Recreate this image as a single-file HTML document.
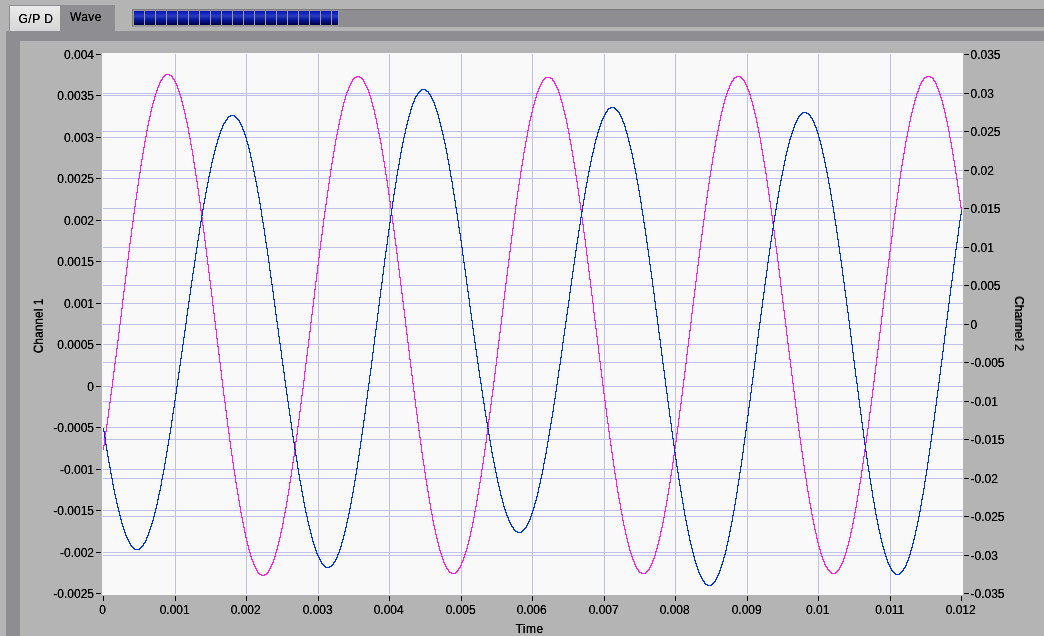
<!DOCTYPE html>
<html><head><meta charset="utf-8"><style>
html,body{margin:0;padding:0;width:1044px;height:636px;overflow:hidden;background:#b4b4b4;}
svg{display:block;}
text{font-family:"Liberation Sans",sans-serif;font-size:12px;}
</style></head><body>
<svg width="1044" height="636" viewBox="0 0 1044 636">
<defs>
<filter id="crisp" x="0" y="0" width="100%" height="100%"><feComponentTransfer><feFuncA type="linear" slope="1.5" intercept="0"/></feComponentTransfer></filter>
<linearGradient id="tabg" x1="0" y1="0" x2="0" y2="1"><stop offset="0" stop-color="#ebebeb"/><stop offset="1" stop-color="#d6d6d6"/></linearGradient>
<linearGradient id="pb" x1="0" y1="0" x2="0" y2="1">
<stop offset="0" stop-color="#0010b8"/><stop offset="0.35" stop-color="#2a3cc0"/><stop offset="0.6" stop-color="#0a1aa0"/><stop offset="1" stop-color="#000040"/></linearGradient>
</defs>
<rect x="0" y="0" width="1044" height="636" fill="#b4b4b4"/>
<!-- tabs -->
<rect x="9" y="5" width="106" height="26" fill="#8e8d92"/>
<rect x="10" y="6" width="50" height="25" fill="url(#tabg)"/>
<!-- progress bar -->
<rect x="132" y="9" width="912" height="18" fill="#7c7c7c"/>
<rect x="133" y="10" width="911" height="17" fill="#8e8d92"/>
<rect x="133" y="10" width="206" height="17" fill="#9a9a9a"/>
<rect x="134" y="11" width="10" height="14" fill="url(#pb)"/><rect x="145" y="11" width="10" height="14" fill="url(#pb)"/><rect x="156" y="11" width="10" height="14" fill="url(#pb)"/><rect x="167" y="11" width="10" height="14" fill="url(#pb)"/><rect x="178" y="11" width="10" height="14" fill="url(#pb)"/><rect x="189" y="11" width="10" height="14" fill="url(#pb)"/><rect x="200" y="11" width="10" height="14" fill="url(#pb)"/><rect x="211" y="11" width="10" height="14" fill="url(#pb)"/><rect x="222" y="11" width="10" height="14" fill="url(#pb)"/><rect x="233" y="11" width="10" height="14" fill="url(#pb)"/><rect x="244" y="11" width="10" height="14" fill="url(#pb)"/><rect x="255" y="11" width="10" height="14" fill="url(#pb)"/><rect x="266" y="11" width="10" height="14" fill="url(#pb)"/><rect x="277" y="11" width="10" height="14" fill="url(#pb)"/><rect x="288" y="11" width="10" height="14" fill="url(#pb)"/><rect x="299" y="11" width="10" height="14" fill="url(#pb)"/><rect x="310" y="11" width="10" height="14" fill="url(#pb)"/><rect x="321" y="11" width="10" height="14" fill="url(#pb)"/><rect x="332" y="11" width="6" height="14" fill="url(#pb)"/>
<!-- panel -->
<rect x="6" y="31" width="1038" height="605" fill="#8e8d92"/>
<rect x="20" y="41" width="1024" height="595" fill="#b4b4b4"/>
<rect x="102" y="53" width="861" height="542" fill="#f9f9f9"/><rect x="175" y="54" width="1" height="540" fill="#c0c0e8"/><rect x="246" y="54" width="1" height="540" fill="#c0c0e8"/><rect x="318" y="54" width="1" height="540" fill="#c0c0e8"/><rect x="389" y="54" width="1" height="540" fill="#c0c0e8"/><rect x="461" y="54" width="1" height="540" fill="#c0c0e8"/><rect x="532" y="54" width="1" height="540" fill="#c0c0e8"/><rect x="604" y="54" width="1" height="540" fill="#c0c0e8"/><rect x="675" y="54" width="1" height="540" fill="#c0c0e8"/><rect x="747" y="54" width="1" height="540" fill="#c0c0e8"/><rect x="818" y="54" width="1" height="540" fill="#c0c0e8"/><rect x="890" y="54" width="1" height="540" fill="#c0c0e8"/><rect x="103" y="386" width="860" height="1" fill="#c0c0e8"/><rect x="103" y="131" width="860" height="1" fill="#c0c0e8"/><rect x="103" y="516" width="860" height="1" fill="#c0c0e8"/><rect x="103" y="261" width="860" height="1" fill="#c0c0e8"/><rect x="103" y="137" width="860" height="1" fill="#c0c0e8"/><rect x="103" y="401" width="860" height="1" fill="#c0c0e8"/><rect x="103" y="285" width="860" height="1" fill="#c0c0e8"/><rect x="103" y="552" width="860" height="1" fill="#c0c0e8"/><rect x="103" y="170" width="860" height="1" fill="#c0c0e8"/><rect x="103" y="427" width="860" height="1" fill="#c0c0e8"/><rect x="103" y="555" width="860" height="1" fill="#c0c0e8"/><rect x="103" y="303" width="860" height="1" fill="#c0c0e8"/><rect x="103" y="178" width="860" height="1" fill="#c0c0e8"/><rect x="103" y="439" width="860" height="1" fill="#c0c0e8"/><rect x="103" y="324" width="860" height="1" fill="#c0c0e8"/><rect x="103" y="208" width="860" height="1" fill="#c0c0e8"/><rect x="103" y="469" width="860" height="1" fill="#c0c0e8"/><rect x="103" y="344" width="860" height="1" fill="#c0c0e8"/><rect x="103" y="220" width="860" height="1" fill="#c0c0e8"/><rect x="103" y="93" width="860" height="1" fill="#c0c0e8"/><rect x="103" y="478" width="860" height="1" fill="#c0c0e8"/><rect x="103" y="95" width="860" height="1" fill="#c0c0e8"/><rect x="103" y="362" width="860" height="1" fill="#c0c0e8"/><rect x="103" y="247" width="860" height="1" fill="#c0c0e8"/><rect x="103" y="510" width="860" height="1" fill="#c0c0e8"/><path d="M103 445h1v5h-1zM104 438h1v8h-1zM105 431h1v8h-1zM106 424h1v8h-1zM107 417h1v8h-1zM108 409h1v9h-1zM109 402h1v8h-1zM110 394h1v9h-1zM111 387h1v8h-1zM112 379h1v9h-1zM113 371h1v9h-1zM114 363h1v9h-1zM115 356h1v8h-1zM116 348h1v9h-1zM117 340h1v9h-1zM118 332h1v9h-1zM119 324h1v9h-1zM120 316h1v9h-1zM121 308h1v9h-1zM122 299h1v10h-1zM123 291h1v9h-1zM124 283h1v9h-1zM125 275h1v9h-1zM126 267h1v9h-1zM127 259h1v9h-1zM128 251h1v9h-1zM129 243h1v9h-1zM130 236h1v8h-1zM131 228h1v9h-1zM132 221h1v8h-1zM133 213h1v9h-1zM134 206h1v8h-1zM135 199h1v8h-1zM136 192h1v8h-1zM137 185h1v8h-1zM138 178h1v8h-1zM139 172h1v7h-1zM140 165h1v8h-1zM141 159h1v7h-1zM142 153h1v7h-1zM143 147h1v7h-1zM144 141h1v7h-1zM145 136h1v6h-1zM146 130h1v7h-1zM147 125h1v6h-1zM148 120h1v6h-1zM149 116h1v5h-1zM150 111h1v6h-1zM151 107h1v5h-1zM152 103h1v5h-1zM153 100h1v4h-1zM154 96h1v5h-1zM155 93h1v4h-1zM156 90h1v4h-1zM157 87h1v4h-1zM158 85h1v3h-1zM159 82h1v4h-1zM160 80h1v3h-1zM161 79h1v2h-1zM162 77h1v3h-1zM163 76h1v2h-1zM164 75h1v2h-1zM165 74h1v2h-1zM166 74h1v1h-1zM167 74h1v1h-1zM168 74h1v1h-1zM169 74h1v2h-1zM170 75h1v1h-1zM171 75h1v2h-1zM172 76h1v3h-1zM173 78h1v2h-1zM174 79h1v3h-1zM175 81h1v3h-1zM176 83h1v3h-1zM177 85h1v4h-1zM178 88h1v4h-1zM179 91h1v4h-1zM180 94h1v4h-1zM181 97h1v5h-1zM182 101h1v5h-1zM183 105h1v5h-1zM184 109h1v5h-1zM185 113h1v6h-1zM186 118h1v5h-1zM187 122h1v6h-1zM188 127h1v7h-1zM189 133h1v6h-1zM190 138h1v7h-1zM191 144h1v6h-1zM192 149h1v7h-1zM193 155h1v8h-1zM194 162h1v7h-1zM195 168h1v8h-1zM196 175h1v7h-1zM197 181h1v8h-1zM198 188h1v8h-1zM199 195h1v8h-1zM200 202h1v9h-1zM201 210h1v8h-1zM202 217h1v9h-1zM203 225h1v8h-1zM204 232h1v9h-1zM205 240h1v9h-1zM206 248h1v9h-1zM207 256h1v9h-1zM208 264h1v9h-1zM209 272h1v9h-1zM210 280h1v9h-1zM211 288h1v9h-1zM212 296h1v10h-1zM213 305h1v9h-1zM214 313h1v9h-1zM215 321h1v9h-1zM216 329h1v10h-1zM217 338h1v9h-1zM218 346h1v9h-1zM219 354h1v9h-1zM220 362h1v9h-1zM221 370h1v10h-1zM222 379h1v9h-1zM223 387h1v9h-1zM224 395h1v8h-1zM225 402h1v9h-1zM226 410h1v9h-1zM227 418h1v9h-1zM228 426h1v8h-1zM229 433h1v9h-1zM230 441h1v8h-1zM231 448h1v8h-1zM232 455h1v8h-1zM233 462h1v8h-1zM234 469h1v7h-1zM235 475h1v8h-1zM236 482h1v7h-1zM237 488h1v7h-1zM238 494h1v7h-1zM239 500h1v7h-1zM240 506h1v7h-1zM241 512h1v6h-1zM242 517h1v6h-1zM243 522h1v6h-1zM244 527h1v6h-1zM245 532h1v6h-1zM246 537h1v5h-1zM247 541h1v5h-1zM248 545h1v5h-1zM249 549h1v4h-1zM250 552h1v5h-1zM251 556h1v4h-1zM252 559h1v3h-1zM253 561h1v4h-1zM254 564h1v3h-1zM255 566h1v3h-1zM256 568h1v3h-1zM257 570h1v3h-1zM258 572h1v2h-1zM259 573h1v2h-1zM260 574h1v1h-1zM261 574h1v2h-1zM262 575h1v1h-1zM263 575h1v1h-1zM264 574h1v2h-1zM265 574h1v1h-1zM266 573h1v2h-1zM267 572h1v2h-1zM268 570h1v3h-1zM269 568h1v3h-1zM270 566h1v3h-1zM271 564h1v3h-1zM272 562h1v3h-1zM273 559h1v4h-1zM274 556h1v4h-1zM275 552h1v5h-1zM276 549h1v4h-1zM277 545h1v5h-1zM278 541h1v5h-1zM279 537h1v5h-1zM280 532h1v6h-1zM281 528h1v5h-1zM282 523h1v6h-1zM283 517h1v7h-1zM284 512h1v6h-1zM285 507h1v6h-1zM286 501h1v7h-1zM287 495h1v7h-1zM288 489h1v7h-1zM289 482h1v8h-1zM290 476h1v7h-1zM291 469h1v8h-1zM292 462h1v8h-1zM293 456h1v7h-1zM294 448h1v9h-1zM295 441h1v8h-1zM296 434h1v8h-1zM297 426h1v9h-1zM298 419h1v8h-1zM299 411h1v9h-1zM300 403h1v9h-1zM301 395h1v9h-1zM302 388h1v8h-1zM303 380h1v9h-1zM304 371h1v10h-1zM305 363h1v9h-1zM306 355h1v9h-1zM307 347h1v9h-1zM308 339h1v9h-1zM309 331h1v9h-1zM310 322h1v10h-1zM311 314h1v9h-1zM312 306h1v9h-1zM313 298h1v9h-1zM314 289h1v10h-1zM315 281h1v9h-1zM316 273h1v9h-1zM317 265h1v9h-1zM318 257h1v9h-1zM319 249h1v9h-1zM320 241h1v9h-1zM321 234h1v8h-1zM322 226h1v9h-1zM323 218h1v9h-1zM324 211h1v8h-1zM325 204h1v8h-1zM326 197h1v8h-1zM327 190h1v8h-1zM328 183h1v8h-1zM329 176h1v8h-1zM330 169h1v8h-1zM331 163h1v7h-1zM332 157h1v7h-1zM333 151h1v7h-1zM334 145h1v7h-1zM335 139h1v7h-1zM336 134h1v6h-1zM337 129h1v6h-1zM338 124h1v6h-1zM339 119h1v6h-1zM340 115h1v5h-1zM341 110h1v6h-1zM342 106h1v5h-1zM343 102h1v5h-1zM344 99h1v4h-1zM345 95h1v5h-1zM346 92h1v4h-1zM347 90h1v3h-1zM348 87h1v4h-1zM349 85h1v3h-1zM350 83h1v3h-1zM351 81h1v3h-1zM352 79h1v3h-1zM353 78h1v2h-1zM354 77h1v2h-1zM355 77h1v1h-1zM356 76h1v2h-1zM357 76h1v1h-1zM358 76h1v1h-1zM359 76h1v2h-1zM360 77h1v1h-1zM361 77h1v2h-1zM362 78h1v2h-1zM363 79h1v3h-1zM364 81h1v3h-1zM365 83h1v3h-1zM366 85h1v3h-1zM367 87h1v3h-1zM368 89h1v4h-1zM369 92h1v4h-1zM370 95h1v4h-1zM371 98h1v5h-1zM372 102h1v5h-1zM373 106h1v4h-1zM374 109h1v6h-1zM375 114h1v5h-1zM376 118h1v6h-1zM377 123h1v6h-1zM378 128h1v6h-1zM379 133h1v6h-1zM380 138h1v6h-1zM381 143h1v7h-1zM382 149h1v7h-1zM383 155h1v7h-1zM384 161h1v7h-1zM385 167h1v8h-1zM386 174h1v7h-1zM387 180h1v8h-1zM388 187h1v8h-1zM389 194h1v8h-1zM390 201h1v8h-1zM391 208h1v8h-1zM392 215h1v9h-1zM393 223h1v8h-1zM394 230h1v9h-1zM395 238h1v8h-1zM396 245h1v9h-1zM397 253h1v9h-1zM398 261h1v9h-1zM399 269h1v9h-1zM400 277h1v9h-1zM401 285h1v9h-1zM402 293h1v9h-1zM403 301h1v9h-1zM404 309h1v9h-1zM405 317h1v10h-1zM406 326h1v9h-1zM407 334h1v9h-1zM408 342h1v9h-1zM409 350h1v10h-1zM410 359h1v9h-1zM411 367h1v9h-1zM412 375h1v9h-1zM413 383h1v9h-1zM414 391h1v9h-1zM415 399h1v9h-1zM416 407h1v8h-1zM417 414h1v9h-1zM418 422h1v9h-1zM419 430h1v8h-1zM420 437h1v8h-1zM421 444h1v9h-1zM422 452h1v8h-1zM423 459h1v7h-1zM424 465h1v8h-1zM425 472h1v8h-1zM426 479h1v7h-1zM427 485h1v7h-1zM428 491h1v7h-1zM429 497h1v7h-1zM430 503h1v7h-1zM431 509h1v6h-1zM432 514h1v7h-1zM433 520h1v6h-1zM434 525h1v5h-1zM435 529h1v6h-1zM436 534h1v5h-1zM437 538h1v5h-1zM438 542h1v5h-1zM439 546h1v5h-1zM440 550h1v4h-1zM441 553h1v4h-1zM442 556h1v4h-1zM443 559h1v4h-1zM444 562h1v3h-1zM445 564h1v3h-1zM446 566h1v3h-1zM447 568h1v2h-1zM448 569h1v3h-1zM449 571h1v2h-1zM450 572h1v1h-1zM451 572h1v2h-1zM452 573h1v1h-1zM453 573h1v1h-1zM454 573h1v1h-1zM455 572h1v2h-1zM456 571h1v2h-1zM457 570h1v2h-1zM458 568h1v3h-1zM459 567h1v2h-1zM460 565h1v3h-1zM461 562h1v4h-1zM462 560h1v3h-1zM463 557h1v4h-1zM464 554h1v4h-1zM465 551h1v4h-1zM466 548h1v4h-1zM467 544h1v5h-1zM468 540h1v5h-1zM469 536h1v5h-1zM470 531h1v6h-1zM471 527h1v5h-1zM472 522h1v6h-1zM473 517h1v6h-1zM474 511h1v7h-1zM475 506h1v6h-1zM476 500h1v7h-1zM477 494h1v7h-1zM478 488h1v7h-1zM479 482h1v7h-1zM480 476h1v7h-1zM481 469h1v8h-1zM482 463h1v7h-1zM483 456h1v8h-1zM484 449h1v8h-1zM485 442h1v8h-1zM486 434h1v9h-1zM487 427h1v8h-1zM488 419h1v9h-1zM489 412h1v8h-1zM490 404h1v9h-1zM491 396h1v9h-1zM492 389h1v8h-1zM493 381h1v9h-1zM494 373h1v9h-1zM495 365h1v9h-1zM496 357h1v9h-1zM497 348h1v10h-1zM498 340h1v9h-1zM499 332h1v9h-1zM500 324h1v9h-1zM501 316h1v9h-1zM502 308h1v9h-1zM503 299h1v10h-1zM504 291h1v9h-1zM505 283h1v9h-1zM506 275h1v9h-1zM507 267h1v9h-1zM508 259h1v9h-1zM509 251h1v9h-1zM510 243h1v9h-1zM511 235h1v9h-1zM512 228h1v8h-1zM513 220h1v9h-1zM514 213h1v8h-1zM515 205h1v9h-1zM516 198h1v8h-1zM517 191h1v8h-1zM518 184h1v8h-1zM519 178h1v7h-1zM520 171h1v8h-1zM521 165h1v7h-1zM522 159h1v7h-1zM523 152h1v8h-1zM524 147h1v6h-1zM525 141h1v7h-1zM526 136h1v6h-1zM527 130h1v7h-1zM528 125h1v6h-1zM529 120h1v6h-1zM530 116h1v5h-1zM531 112h1v5h-1zM532 107h1v6h-1zM533 104h1v4h-1zM534 100h1v5h-1zM535 97h1v4h-1zM536 93h1v5h-1zM537 91h1v3h-1zM538 88h1v4h-1zM539 86h1v3h-1zM540 84h1v3h-1zM541 82h1v3h-1zM542 80h1v3h-1zM543 79h1v2h-1zM544 78h1v2h-1zM545 77h1v2h-1zM546 77h1v1h-1zM547 77h1v1h-1zM548 77h1v1h-1zM549 77h1v1h-1zM550 77h1v2h-1zM551 78h1v1h-1zM552 78h1v3h-1zM553 80h1v2h-1zM554 81h1v3h-1zM555 83h1v3h-1zM556 85h1v3h-1zM557 87h1v3h-1zM558 89h1v4h-1zM559 92h1v4h-1zM560 95h1v5h-1zM561 99h1v4h-1zM562 102h1v5h-1zM563 106h1v5h-1zM564 110h1v5h-1zM565 114h1v5h-1zM566 118h1v6h-1zM567 123h1v6h-1zM568 128h1v6h-1zM569 133h1v7h-1zM570 139h1v6h-1zM571 144h1v7h-1zM572 150h1v7h-1zM573 156h1v7h-1zM574 162h1v7h-1zM575 168h1v8h-1zM576 175h1v7h-1zM577 181h1v8h-1zM578 188h1v8h-1zM579 195h1v8h-1zM580 202h1v8h-1zM581 209h1v9h-1zM582 217h1v8h-1zM583 224h1v9h-1zM584 232h1v8h-1zM585 239h1v9h-1zM586 247h1v9h-1zM587 255h1v9h-1zM588 263h1v9h-1zM589 271h1v9h-1zM590 279h1v9h-1zM591 287h1v9h-1zM592 295h1v9h-1zM593 303h1v10h-1zM594 312h1v9h-1zM595 320h1v9h-1zM596 328h1v9h-1zM597 336h1v9h-1zM598 344h1v10h-1zM599 353h1v9h-1zM600 361h1v9h-1zM601 369h1v9h-1zM602 377h1v9h-1zM603 385h1v9h-1zM604 393h1v8h-1zM605 400h1v9h-1zM606 408h1v9h-1zM607 416h1v8h-1zM608 423h1v9h-1zM609 431h1v8h-1zM610 438h1v8h-1zM611 445h1v8h-1zM612 452h1v8h-1zM613 459h1v8h-1zM614 466h1v8h-1zM615 473h1v7h-1zM616 479h1v8h-1zM617 486h1v7h-1zM618 492h1v7h-1zM619 498h1v6h-1zM620 503h1v7h-1zM621 509h1v6h-1zM622 514h1v7h-1zM623 520h1v6h-1zM624 525h1v5h-1zM625 529h1v6h-1zM626 534h1v5h-1zM627 538h1v5h-1zM628 542h1v5h-1zM629 546h1v5h-1zM630 550h1v4h-1zM631 553h1v4h-1zM632 556h1v4h-1zM633 559h1v3h-1zM634 561h1v4h-1zM635 564h1v3h-1zM636 566h1v3h-1zM637 568h1v2h-1zM638 569h1v3h-1zM639 571h1v2h-1zM640 572h1v1h-1zM641 572h1v2h-1zM642 573h1v1h-1zM643 573h1v1h-1zM644 573h1v1h-1zM645 572h1v2h-1zM646 571h1v2h-1zM647 570h1v2h-1zM648 569h1v2h-1zM649 567h1v3h-1zM650 565h1v3h-1zM651 563h1v3h-1zM652 560h1v4h-1zM653 558h1v3h-1zM654 555h1v4h-1zM655 551h1v5h-1zM656 548h1v4h-1zM657 544h1v5h-1zM658 540h1v5h-1zM659 536h1v5h-1zM660 531h1v6h-1zM661 527h1v5h-1zM662 522h1v6h-1zM663 517h1v6h-1zM664 511h1v7h-1zM665 506h1v6h-1zM666 500h1v7h-1zM667 494h1v7h-1zM668 488h1v7h-1zM669 482h1v7h-1zM670 475h1v8h-1zM671 469h1v7h-1zM672 462h1v8h-1zM673 455h1v8h-1zM674 448h1v8h-1zM675 441h1v8h-1zM676 433h1v9h-1zM677 426h1v8h-1zM678 418h1v9h-1zM679 410h1v9h-1zM680 403h1v8h-1zM681 395h1v9h-1zM682 387h1v9h-1zM683 379h1v9h-1zM684 371h1v9h-1zM685 363h1v9h-1zM686 354h1v10h-1zM687 346h1v9h-1zM688 338h1v9h-1zM689 330h1v9h-1zM690 322h1v9h-1zM691 313h1v10h-1zM692 305h1v9h-1zM693 297h1v9h-1zM694 289h1v9h-1zM695 281h1v9h-1zM696 273h1v9h-1zM697 265h1v9h-1zM698 257h1v9h-1zM699 249h1v9h-1zM700 241h1v9h-1zM701 234h1v8h-1zM702 226h1v9h-1zM703 219h1v8h-1zM704 211h1v9h-1zM705 204h1v8h-1zM706 197h1v8h-1zM707 190h1v8h-1zM708 183h1v8h-1zM709 176h1v8h-1zM710 170h1v7h-1zM711 164h1v7h-1zM712 157h1v8h-1zM713 152h1v6h-1zM714 146h1v7h-1zM715 140h1v7h-1zM716 135h1v6h-1zM717 130h1v6h-1zM718 125h1v6h-1zM719 120h1v6h-1zM720 115h1v6h-1zM721 111h1v5h-1zM722 107h1v5h-1zM723 103h1v5h-1zM724 99h1v5h-1zM725 96h1v4h-1zM726 93h1v4h-1zM727 90h1v4h-1zM728 88h1v3h-1zM729 85h1v4h-1zM730 83h1v3h-1zM731 81h1v3h-1zM732 80h1v2h-1zM733 78h1v3h-1zM734 77h1v2h-1zM735 77h1v1h-1zM736 76h1v2h-1zM737 76h1v1h-1zM738 76h1v1h-1zM739 76h1v1h-1zM740 76h1v2h-1zM741 77h1v2h-1zM742 78h1v2h-1zM743 79h1v2h-1zM744 80h1v3h-1zM745 82h1v3h-1zM746 84h1v3h-1zM747 86h1v4h-1zM748 89h1v3h-1zM749 91h1v4h-1zM750 94h1v5h-1zM751 98h1v4h-1zM752 101h1v5h-1zM753 105h1v5h-1zM754 109h1v5h-1zM755 113h1v5h-1zM756 117h1v6h-1zM757 122h1v6h-1zM758 127h1v6h-1zM759 132h1v6h-1zM760 137h1v7h-1zM761 143h1v7h-1zM762 149h1v7h-1zM763 155h1v7h-1zM764 161h1v7h-1zM765 167h1v7h-1zM766 173h1v8h-1zM767 180h1v8h-1zM768 187h1v8h-1zM769 194h1v8h-1zM770 201h1v8h-1zM771 208h1v8h-1zM772 215h1v9h-1zM773 223h1v8h-1zM774 230h1v9h-1zM775 238h1v9h-1zM776 246h1v8h-1zM777 253h1v9h-1zM778 261h1v9h-1zM779 269h1v9h-1zM780 277h1v10h-1zM781 286h1v9h-1zM782 294h1v9h-1zM783 302h1v9h-1zM784 310h1v9h-1zM785 318h1v9h-1zM786 326h1v10h-1zM787 335h1v9h-1zM788 343h1v9h-1zM789 351h1v9h-1zM790 359h1v9h-1zM791 367h1v9h-1zM792 375h1v9h-1zM793 383h1v9h-1zM794 391h1v9h-1zM795 399h1v9h-1zM796 407h1v8h-1zM797 414h1v9h-1zM798 422h1v9h-1zM799 430h1v8h-1zM800 437h1v8h-1zM801 444h1v8h-1zM802 451h1v8h-1zM803 458h1v8h-1zM804 465h1v8h-1zM805 472h1v7h-1zM806 478h1v8h-1zM807 485h1v7h-1zM808 491h1v7h-1zM809 497h1v7h-1zM810 503h1v6h-1zM811 508h1v7h-1zM812 514h1v6h-1zM813 519h1v6h-1zM814 524h1v6h-1zM815 529h1v5h-1zM816 533h1v6h-1zM817 538h1v5h-1zM818 542h1v5h-1zM819 546h1v4h-1zM820 549h1v5h-1zM821 553h1v4h-1zM822 556h1v4h-1zM823 559h1v3h-1zM824 561h1v4h-1zM825 564h1v3h-1zM826 566h1v2h-1zM827 567h1v3h-1zM828 569h1v2h-1zM829 570h1v2h-1zM830 571h1v2h-1zM831 572h1v2h-1zM832 573h1v1h-1zM833 573h1v1h-1zM834 573h1v1h-1zM835 572h1v2h-1zM836 571h1v2h-1zM837 570h1v2h-1zM838 569h1v2h-1zM839 567h1v3h-1zM840 565h1v3h-1zM841 563h1v3h-1zM842 561h1v3h-1zM843 558h1v4h-1zM844 555h1v4h-1zM845 552h1v4h-1zM846 548h1v5h-1zM847 545h1v4h-1zM848 541h1v5h-1zM849 537h1v5h-1zM850 532h1v6h-1zM851 528h1v5h-1zM852 523h1v6h-1zM853 518h1v6h-1zM854 512h1v7h-1zM855 507h1v6h-1zM856 501h1v7h-1zM857 495h1v7h-1zM858 489h1v7h-1zM859 483h1v7h-1zM860 477h1v7h-1zM861 470h1v8h-1zM862 463h1v8h-1zM863 456h1v8h-1zM864 449h1v8h-1zM865 442h1v8h-1zM866 435h1v8h-1zM867 428h1v8h-1zM868 420h1v9h-1zM869 412h1v9h-1zM870 405h1v8h-1zM871 397h1v9h-1zM872 389h1v9h-1zM873 381h1v9h-1zM874 373h1v9h-1zM875 365h1v9h-1zM876 357h1v9h-1zM877 349h1v9h-1zM878 340h1v10h-1zM879 332h1v9h-1zM880 324h1v9h-1zM881 316h1v9h-1zM882 308h1v9h-1zM883 299h1v10h-1zM884 291h1v9h-1zM885 283h1v9h-1zM886 275h1v9h-1zM887 267h1v9h-1zM888 259h1v9h-1zM889 251h1v9h-1zM890 243h1v9h-1zM891 236h1v8h-1zM892 228h1v9h-1zM893 220h1v9h-1zM894 213h1v8h-1zM895 206h1v8h-1zM896 199h1v8h-1zM897 192h1v8h-1zM898 185h1v8h-1zM899 178h1v8h-1zM900 171h1v8h-1zM901 165h1v7h-1zM902 159h1v7h-1zM903 153h1v7h-1zM904 147h1v7h-1zM905 141h1v7h-1zM906 136h1v6h-1zM907 131h1v6h-1zM908 126h1v6h-1zM909 121h1v6h-1zM910 116h1v6h-1zM911 112h1v5h-1zM912 108h1v5h-1zM913 104h1v5h-1zM914 100h1v5h-1zM915 97h1v4h-1zM916 93h1v5h-1zM917 91h1v3h-1zM918 88h1v4h-1zM919 85h1v4h-1zM920 83h1v3h-1zM921 81h1v3h-1zM922 80h1v2h-1zM923 78h1v3h-1zM924 77h1v2h-1zM925 77h1v1h-1zM926 76h1v2h-1zM927 76h1v1h-1zM928 76h1v1h-1zM929 76h1v1h-1zM930 76h1v2h-1zM931 77h1v1h-1zM932 77h1v2h-1zM933 78h1v3h-1zM934 80h1v2h-1zM935 81h1v3h-1zM936 83h1v4h-1zM937 86h1v3h-1zM938 88h1v4h-1zM939 91h1v4h-1zM940 94h1v4h-1zM941 97h1v4h-1zM942 100h1v5h-1zM943 104h1v5h-1zM944 108h1v5h-1zM945 112h1v6h-1zM946 117h1v5h-1zM947 121h1v6h-1zM948 126h1v6h-1zM949 131h1v7h-1zM950 137h1v6h-1zM951 142h1v7h-1zM952 148h1v7h-1zM953 154h1v7h-1zM954 160h1v7h-1zM955 166h1v8h-1zM956 173h1v7h-1zM957 179h1v8h-1zM958 186h1v8h-1zM959 193h1v8h-1zM960 200h1v8h-1zM961 207h1v5h-1z" fill="#ff20e0" shape-rendering="crispEdges"/><path d="M103 428h1v4h-1zM104 431h1v7h-1zM105 437h1v8h-1zM106 444h1v7h-1zM107 450h1v7h-1zM108 456h1v7h-1zM109 462h1v6h-1zM110 467h1v7h-1zM111 473h1v6h-1zM112 478h1v7h-1zM113 484h1v6h-1zM114 489h1v6h-1zM115 494h1v5h-1zM116 498h1v6h-1zM117 503h1v5h-1zM118 507h1v5h-1zM119 511h1v5h-1zM120 515h1v5h-1zM121 519h1v5h-1zM122 523h1v4h-1zM123 526h1v4h-1zM124 529h1v4h-1zM125 532h1v4h-1zM126 535h1v3h-1zM127 537h1v3h-1zM128 539h1v3h-1zM129 541h1v3h-1zM130 543h1v3h-1zM131 545h1v2h-1zM132 546h1v2h-1zM133 547h1v2h-1zM134 548h1v2h-1zM135 549h1v1h-1zM136 549h1v1h-1zM137 549h1v1h-1zM138 549h1v1h-1zM139 548h1v2h-1zM140 547h1v2h-1zM141 546h1v2h-1zM142 545h1v2h-1zM143 543h1v3h-1zM144 542h1v2h-1zM145 540h1v3h-1zM146 537h1v4h-1zM147 535h1v3h-1zM148 532h1v4h-1zM149 529h1v4h-1zM150 526h1v4h-1zM151 523h1v4h-1zM152 520h1v4h-1zM153 516h1v5h-1zM154 512h1v5h-1zM155 508h1v5h-1zM156 504h1v5h-1zM157 499h1v6h-1zM158 494h1v6h-1zM159 490h1v5h-1zM160 485h1v6h-1zM161 479h1v7h-1zM162 474h1v6h-1zM163 469h1v6h-1zM164 463h1v7h-1zM165 457h1v7h-1zM166 451h1v7h-1zM167 445h1v7h-1zM168 439h1v7h-1zM169 433h1v7h-1zM170 427h1v7h-1zM171 420h1v8h-1zM172 413h1v8h-1zM173 407h1v7h-1zM174 400h1v8h-1zM175 393h1v8h-1zM176 386h1v8h-1zM177 379h1v8h-1zM178 372h1v8h-1zM179 365h1v8h-1zM180 358h1v8h-1zM181 351h1v8h-1zM182 344h1v8h-1zM183 337h1v8h-1zM184 330h1v8h-1zM185 323h1v8h-1zM186 315h1v9h-1zM187 308h1v8h-1zM188 301h1v8h-1zM189 294h1v8h-1zM190 287h1v8h-1zM191 280h1v8h-1zM192 273h1v8h-1zM193 267h1v7h-1zM194 260h1v8h-1zM195 253h1v8h-1zM196 247h1v7h-1zM197 240h1v8h-1zM198 234h1v7h-1zM199 227h1v8h-1zM200 221h1v7h-1zM201 215h1v7h-1zM202 209h1v7h-1zM203 203h1v7h-1zM204 198h1v6h-1zM205 192h1v7h-1zM206 187h1v6h-1zM207 182h1v6h-1zM208 176h1v7h-1zM209 172h1v5h-1zM210 167h1v6h-1zM211 162h1v6h-1zM212 158h1v5h-1zM213 154h1v5h-1zM214 150h1v5h-1zM215 146h1v5h-1zM216 143h1v4h-1zM217 139h1v5h-1zM218 136h1v4h-1zM219 133h1v4h-1zM220 130h1v4h-1zM221 128h1v3h-1zM222 125h1v4h-1zM223 123h1v3h-1zM224 122h1v2h-1zM225 120h1v3h-1zM226 119h1v2h-1zM227 117h1v3h-1zM228 116h1v2h-1zM229 116h1v1h-1zM230 115h1v2h-1zM231 115h1v1h-1zM232 115h1v1h-1zM233 115h1v1h-1zM234 115h1v2h-1zM235 116h1v2h-1zM236 117h1v2h-1zM237 118h1v2h-1zM238 119h1v2h-1zM239 120h1v3h-1zM240 122h1v3h-1zM241 124h1v3h-1zM242 126h1v4h-1zM243 129h1v3h-1zM244 131h1v4h-1zM245 134h1v4h-1zM246 137h1v5h-1zM247 141h1v4h-1zM248 144h1v5h-1zM249 148h1v5h-1zM250 152h1v6h-1zM251 157h1v5h-1zM252 161h1v6h-1zM253 166h1v6h-1zM254 171h1v6h-1zM255 176h1v6h-1zM256 181h1v6h-1zM257 186h1v7h-1zM258 192h1v6h-1zM259 197h1v7h-1zM260 203h1v7h-1zM261 209h1v8h-1zM262 216h1v7h-1zM263 222h1v7h-1zM264 228h1v8h-1zM265 235h1v8h-1zM266 242h1v7h-1zM267 248h1v8h-1zM268 255h1v8h-1zM269 262h1v9h-1zM270 270h1v8h-1zM271 277h1v8h-1zM272 284h1v8h-1zM273 291h1v9h-1zM274 299h1v8h-1zM275 306h1v9h-1zM276 314h1v8h-1zM277 321h1v8h-1zM278 328h1v9h-1zM279 336h1v8h-1zM280 343h1v8h-1zM281 350h1v9h-1zM282 358h1v8h-1zM283 365h1v8h-1zM284 372h1v9h-1zM285 380h1v8h-1zM286 387h1v8h-1zM287 394h1v8h-1zM288 401h1v8h-1zM289 408h1v8h-1zM290 415h1v8h-1zM291 422h1v8h-1zM292 429h1v8h-1zM293 436h1v7h-1zM294 442h1v8h-1zM295 449h1v7h-1zM296 455h1v7h-1zM297 461h1v8h-1zM298 468h1v7h-1zM299 474h1v7h-1zM300 480h1v6h-1zM301 485h1v7h-1zM302 491h1v6h-1zM303 496h1v7h-1zM304 502h1v6h-1zM305 507h1v6h-1zM306 512h1v5h-1zM307 516h1v6h-1zM308 521h1v5h-1zM309 525h1v5h-1zM310 529h1v5h-1zM311 533h1v5h-1zM312 537h1v5h-1zM313 541h1v4h-1zM314 544h1v4h-1zM315 547h1v4h-1zM316 550h1v4h-1zM317 553h1v3h-1zM318 555h1v3h-1zM319 557h1v3h-1zM320 559h1v3h-1zM321 561h1v3h-1zM322 563h1v2h-1zM323 564h1v2h-1zM324 565h1v2h-1zM325 566h1v2h-1zM326 567h1v1h-1zM327 567h1v1h-1zM328 567h1v1h-1zM329 566h1v2h-1zM330 566h1v1h-1zM331 565h1v2h-1zM332 564h1v2h-1zM333 562h1v3h-1zM334 561h1v2h-1zM335 559h1v3h-1zM336 557h1v3h-1zM337 554h1v4h-1zM338 552h1v3h-1zM339 549h1v4h-1zM340 546h1v4h-1zM341 542h1v5h-1zM342 539h1v4h-1zM343 535h1v5h-1zM344 531h1v5h-1zM345 527h1v5h-1zM346 522h1v6h-1zM347 518h1v5h-1zM348 513h1v6h-1zM349 508h1v6h-1zM350 503h1v6h-1zM351 497h1v7h-1zM352 492h1v6h-1zM353 486h1v7h-1zM354 480h1v7h-1zM355 474h1v7h-1zM356 468h1v7h-1zM357 461h1v8h-1zM358 455h1v7h-1zM359 448h1v8h-1zM360 441h1v8h-1zM361 434h1v8h-1zM362 427h1v8h-1zM363 420h1v8h-1zM364 413h1v8h-1zM365 405h1v9h-1zM366 398h1v8h-1zM367 390h1v9h-1zM368 383h1v8h-1zM369 375h1v9h-1zM370 368h1v8h-1zM371 360h1v9h-1zM372 352h1v9h-1zM373 344h1v9h-1zM374 336h1v9h-1zM375 329h1v8h-1zM376 321h1v9h-1zM377 313h1v9h-1zM378 305h1v9h-1zM379 297h1v9h-1zM380 289h1v9h-1zM381 282h1v8h-1zM382 274h1v9h-1zM383 266h1v9h-1zM384 258h1v9h-1zM385 251h1v8h-1zM386 244h1v8h-1zM387 236h1v9h-1zM388 229h1v8h-1zM389 222h1v8h-1zM390 215h1v8h-1zM391 208h1v8h-1zM392 201h1v8h-1zM393 194h1v8h-1zM394 188h1v7h-1zM395 182h1v7h-1zM396 175h1v8h-1zM397 169h1v7h-1zM398 164h1v6h-1zM399 158h1v7h-1zM400 152h1v7h-1zM401 147h1v6h-1zM402 142h1v6h-1zM403 137h1v6h-1zM404 133h1v5h-1zM405 128h1v6h-1zM406 124h1v5h-1zM407 120h1v5h-1zM408 116h1v5h-1zM409 113h1v4h-1zM410 109h1v5h-1zM411 106h1v4h-1zM412 103h1v4h-1zM413 101h1v3h-1zM414 98h1v4h-1zM415 96h1v3h-1zM416 95h1v2h-1zM417 93h1v3h-1zM418 92h1v2h-1zM419 91h1v2h-1zM420 90h1v2h-1zM421 89h1v2h-1zM422 89h1v1h-1zM423 89h1v1h-1zM424 89h1v1h-1zM425 89h1v2h-1zM426 90h1v2h-1zM427 91h1v1h-1zM428 91h1v3h-1zM429 93h1v2h-1zM430 94h1v3h-1zM431 96h1v3h-1zM432 98h1v3h-1zM433 100h1v3h-1zM434 102h1v4h-1zM435 105h1v4h-1zM436 108h1v4h-1zM437 111h1v4h-1zM438 114h1v5h-1zM439 118h1v5h-1zM440 122h1v5h-1zM441 126h1v5h-1zM442 130h1v5h-1zM443 134h1v6h-1zM444 139h1v5h-1zM445 143h1v6h-1zM446 148h1v6h-1zM447 153h1v7h-1zM448 159h1v6h-1zM449 164h1v7h-1zM450 170h1v7h-1zM451 176h1v6h-1zM452 181h1v8h-1zM453 188h1v7h-1zM454 194h1v7h-1zM455 200h1v8h-1zM456 207h1v7h-1zM457 213h1v8h-1zM458 220h1v8h-1zM459 227h1v7h-1zM460 233h1v8h-1zM461 240h1v8h-1zM462 247h1v9h-1zM463 255h1v8h-1zM464 262h1v8h-1zM465 269h1v8h-1zM466 276h1v9h-1zM467 284h1v8h-1zM468 291h1v8h-1zM469 298h1v9h-1zM470 306h1v8h-1zM471 313h1v8h-1zM472 320h1v9h-1zM473 328h1v8h-1zM474 335h1v8h-1zM475 342h1v8h-1zM476 349h1v8h-1zM477 356h1v8h-1zM478 363h1v8h-1zM479 370h1v8h-1zM480 377h1v7h-1zM481 383h1v8h-1zM482 390h1v8h-1zM483 397h1v7h-1zM484 403h1v8h-1zM485 410h1v7h-1zM486 416h1v7h-1zM487 422h1v7h-1zM488 428h1v7h-1zM489 434h1v7h-1zM490 440h1v7h-1zM491 446h1v7h-1zM492 452h1v6h-1zM493 457h1v6h-1zM494 462h1v6h-1zM495 467h1v6h-1zM496 472h1v6h-1zM497 477h1v6h-1zM498 482h1v5h-1zM499 486h1v5h-1zM500 490h1v6h-1zM501 495h1v4h-1zM502 498h1v5h-1zM503 502h1v5h-1zM504 506h1v4h-1zM505 509h1v4h-1zM506 512h1v4h-1zM507 515h1v3h-1zM508 517h1v4h-1zM509 520h1v3h-1zM510 522h1v3h-1zM511 524h1v3h-1zM512 526h1v2h-1zM513 527h1v3h-1zM514 529h1v2h-1zM515 530h1v2h-1zM516 531h1v1h-1zM517 531h1v2h-1zM518 532h1v1h-1zM519 532h1v1h-1zM520 532h1v1h-1zM521 531h1v2h-1zM522 530h1v2h-1zM523 529h1v2h-1zM524 528h1v2h-1zM525 527h1v2h-1zM526 525h1v3h-1zM527 523h1v3h-1zM528 521h1v3h-1zM529 519h1v3h-1zM530 516h1v4h-1zM531 513h1v4h-1zM532 510h1v4h-1zM533 507h1v4h-1zM534 503h1v5h-1zM535 500h1v4h-1zM536 496h1v5h-1zM537 492h1v5h-1zM538 487h1v6h-1zM539 483h1v5h-1zM540 478h1v6h-1zM541 474h1v5h-1zM542 469h1v6h-1zM543 463h1v7h-1zM544 458h1v6h-1zM545 453h1v6h-1zM546 447h1v7h-1zM547 441h1v7h-1zM548 435h1v7h-1zM549 429h1v7h-1zM550 423h1v7h-1zM551 417h1v7h-1zM552 411h1v7h-1zM553 404h1v8h-1zM554 398h1v7h-1zM555 391h1v8h-1zM556 384h1v8h-1zM557 377h1v8h-1zM558 370h1v8h-1zM559 364h1v7h-1zM560 357h1v8h-1zM561 350h1v8h-1zM562 342h1v9h-1zM563 335h1v8h-1zM564 328h1v8h-1zM565 321h1v8h-1zM566 314h1v8h-1zM567 307h1v8h-1zM568 300h1v8h-1zM569 292h1v9h-1zM570 285h1v8h-1zM571 278h1v8h-1zM572 271h1v8h-1zM573 264h1v8h-1zM574 257h1v8h-1zM575 250h1v8h-1zM576 243h1v8h-1zM577 237h1v7h-1zM578 230h1v8h-1zM579 224h1v7h-1zM580 217h1v8h-1zM581 211h1v7h-1zM582 205h1v7h-1zM583 199h1v7h-1zM584 193h1v7h-1zM585 187h1v7h-1zM586 182h1v6h-1zM587 176h1v7h-1zM588 171h1v6h-1zM589 166h1v6h-1zM590 161h1v6h-1zM591 156h1v6h-1zM592 152h1v5h-1zM593 148h1v5h-1zM594 143h1v6h-1zM595 139h1v5h-1zM596 136h1v4h-1zM597 132h1v5h-1zM598 129h1v4h-1zM599 126h1v4h-1zM600 123h1v4h-1zM601 120h1v4h-1zM602 118h1v3h-1zM603 116h1v3h-1zM604 114h1v3h-1zM605 112h1v3h-1zM606 111h1v2h-1zM607 109h1v3h-1zM608 108h1v2h-1zM609 108h1v1h-1zM610 107h1v2h-1zM611 107h1v1h-1zM612 107h1v1h-1zM613 107h1v1h-1zM614 107h1v2h-1zM615 108h1v2h-1zM616 109h1v2h-1zM617 110h1v2h-1zM618 111h1v2h-1zM619 112h1v3h-1zM620 114h1v3h-1zM621 116h1v3h-1zM622 118h1v4h-1zM623 121h1v3h-1zM624 123h1v4h-1zM625 126h1v5h-1zM626 130h1v4h-1zM627 133h1v5h-1zM628 137h1v5h-1zM629 141h1v5h-1zM630 145h1v5h-1zM631 149h1v5h-1zM632 153h1v6h-1zM633 158h1v6h-1zM634 163h1v6h-1zM635 168h1v6h-1zM636 173h1v7h-1zM637 179h1v6h-1zM638 184h1v7h-1zM639 190h1v7h-1zM640 196h1v7h-1zM641 202h1v8h-1zM642 209h1v7h-1zM643 215h1v8h-1zM644 222h1v7h-1zM645 228h1v8h-1zM646 235h1v8h-1zM647 242h1v8h-1zM648 249h1v8h-1zM649 256h1v9h-1zM650 264h1v8h-1zM651 271h1v8h-1zM652 278h1v9h-1zM653 286h1v8h-1zM654 293h1v9h-1zM655 301h1v9h-1zM656 309h1v8h-1zM657 316h1v9h-1zM658 324h1v9h-1zM659 332h1v8h-1zM660 339h1v9h-1zM661 347h1v9h-1zM662 355h1v9h-1zM663 363h1v8h-1zM664 370h1v9h-1zM665 378h1v9h-1zM666 386h1v8h-1zM667 393h1v9h-1zM668 401h1v8h-1zM669 408h1v9h-1zM670 416h1v8h-1zM671 423h1v9h-1zM672 431h1v8h-1zM673 438h1v8h-1zM674 445h1v8h-1zM675 452h1v8h-1zM676 459h1v8h-1zM677 466h1v7h-1zM678 472h1v8h-1zM679 479h1v7h-1zM680 485h1v7h-1zM681 491h1v7h-1zM682 497h1v7h-1zM683 503h1v7h-1zM684 509h1v7h-1zM685 515h1v6h-1zM686 520h1v6h-1zM687 525h1v6h-1zM688 530h1v6h-1zM689 535h1v6h-1zM690 540h1v5h-1zM691 544h1v5h-1zM692 548h1v5h-1zM693 552h1v5h-1zM694 556h1v5h-1zM695 560h1v4h-1zM696 563h1v4h-1zM697 566h1v4h-1zM698 569h1v4h-1zM699 572h1v3h-1zM700 574h1v3h-1zM701 576h1v3h-1zM702 578h1v3h-1zM703 580h1v2h-1zM704 581h1v3h-1zM705 583h1v2h-1zM706 584h1v1h-1zM707 584h1v2h-1zM708 585h1v1h-1zM709 585h1v1h-1zM710 585h1v1h-1zM711 584h1v2h-1zM712 583h1v2h-1zM713 582h1v2h-1zM714 581h1v2h-1zM715 579h1v3h-1zM716 577h1v3h-1zM717 575h1v3h-1zM718 573h1v3h-1zM719 570h1v4h-1zM720 567h1v4h-1zM721 564h1v4h-1zM722 561h1v4h-1zM723 557h1v5h-1zM724 554h1v4h-1zM725 550h1v5h-1zM726 545h1v6h-1zM727 541h1v5h-1zM728 536h1v6h-1zM729 531h1v6h-1zM730 526h1v6h-1zM731 521h1v6h-1zM732 515h1v7h-1zM733 510h1v6h-1zM734 504h1v7h-1zM735 498h1v7h-1zM736 492h1v7h-1zM737 485h1v8h-1zM738 479h1v7h-1zM739 472h1v8h-1zM740 466h1v7h-1zM741 459h1v8h-1zM742 452h1v8h-1zM743 444h1v9h-1zM744 437h1v8h-1zM745 430h1v8h-1zM746 422h1v9h-1zM747 415h1v8h-1zM748 407h1v9h-1zM749 400h1v8h-1zM750 392h1v9h-1zM751 384h1v9h-1zM752 377h1v8h-1zM753 369h1v9h-1zM754 361h1v9h-1zM755 353h1v9h-1zM756 345h1v9h-1zM757 337h1v9h-1zM758 329h1v9h-1zM759 322h1v8h-1zM760 314h1v9h-1zM761 307h1v8h-1zM762 299h1v9h-1zM763 292h1v8h-1zM764 284h1v9h-1zM765 277h1v8h-1zM766 270h1v8h-1zM767 262h1v9h-1zM768 255h1v8h-1zM769 248h1v8h-1zM770 241h1v8h-1zM771 235h1v7h-1zM772 228h1v8h-1zM773 221h1v8h-1zM774 215h1v7h-1zM775 209h1v7h-1zM776 203h1v7h-1zM777 197h1v7h-1zM778 191h1v7h-1zM779 185h1v7h-1zM780 180h1v6h-1zM781 175h1v6h-1zM782 170h1v6h-1zM783 165h1v6h-1zM784 160h1v6h-1zM785 155h1v6h-1zM786 151h1v5h-1zM787 147h1v5h-1zM788 143h1v5h-1zM789 139h1v5h-1zM790 136h1v4h-1zM791 133h1v4h-1zM792 130h1v4h-1zM793 127h1v4h-1zM794 124h1v4h-1zM795 122h1v3h-1zM796 120h1v3h-1zM797 118h1v3h-1zM798 116h1v3h-1zM799 115h1v2h-1zM800 114h1v2h-1zM801 113h1v2h-1zM802 112h1v2h-1zM803 112h1v1h-1zM804 112h1v1h-1zM805 112h1v1h-1zM806 112h1v2h-1zM807 113h1v1h-1zM808 113h1v2h-1zM809 114h1v2h-1zM810 115h1v3h-1zM811 117h1v2h-1zM812 118h1v3h-1zM813 120h1v3h-1zM814 122h1v4h-1zM815 125h1v3h-1zM816 127h1v4h-1zM817 130h1v4h-1zM818 133h1v5h-1zM819 137h1v4h-1zM820 140h1v5h-1zM821 144h1v5h-1zM822 148h1v6h-1zM823 153h1v5h-1zM824 157h1v6h-1zM825 162h1v6h-1zM826 167h1v6h-1zM827 172h1v6h-1zM828 177h1v7h-1zM829 183h1v6h-1zM830 188h1v7h-1zM831 194h1v7h-1zM832 200h1v7h-1zM833 206h1v7h-1zM834 212h1v8h-1zM835 219h1v7h-1zM836 225h1v8h-1zM837 232h1v8h-1zM838 239h1v8h-1zM839 246h1v8h-1zM840 253h1v8h-1zM841 260h1v8h-1zM842 267h1v9h-1zM843 275h1v8h-1zM844 282h1v9h-1zM845 290h1v8h-1zM846 297h1v9h-1zM847 305h1v8h-1zM848 312h1v9h-1zM849 320h1v9h-1zM850 328h1v9h-1zM851 336h1v9h-1zM852 344h1v9h-1zM853 352h1v9h-1zM854 360h1v9h-1zM855 368h1v9h-1zM856 376h1v8h-1zM857 383h1v9h-1zM858 391h1v9h-1zM859 399h1v9h-1zM860 407h1v8h-1zM861 414h1v9h-1zM862 422h1v8h-1zM863 429h1v9h-1zM864 437h1v8h-1zM865 444h1v8h-1zM866 451h1v8h-1zM867 458h1v8h-1zM868 465h1v7h-1zM869 471h1v8h-1zM870 478h1v7h-1zM871 484h1v7h-1zM872 490h1v8h-1zM873 497h1v6h-1zM874 502h1v7h-1zM875 508h1v7h-1zM876 514h1v6h-1zM877 519h1v6h-1zM878 524h1v6h-1zM879 529h1v5h-1zM880 533h1v6h-1zM881 538h1v5h-1zM882 542h1v5h-1zM883 546h1v4h-1zM884 549h1v5h-1zM885 553h1v4h-1zM886 556h1v4h-1zM887 559h1v4h-1zM888 562h1v3h-1zM889 564h1v3h-1zM890 566h1v3h-1zM891 568h1v3h-1zM892 570h1v2h-1zM893 571h1v2h-1zM894 572h1v2h-1zM895 573h1v2h-1zM896 574h1v1h-1zM897 574h1v1h-1zM898 574h1v1h-1zM899 573h1v2h-1zM900 572h1v2h-1zM901 571h1v2h-1zM902 570h1v2h-1zM903 568h1v3h-1zM904 567h1v2h-1zM905 565h1v3h-1zM906 562h1v4h-1zM907 560h1v3h-1zM908 557h1v4h-1zM909 554h1v4h-1zM910 550h1v5h-1zM911 547h1v4h-1zM912 543h1v5h-1zM913 539h1v5h-1zM914 535h1v5h-1zM915 530h1v6h-1zM916 526h1v5h-1zM917 521h1v6h-1zM918 516h1v6h-1zM919 511h1v6h-1zM920 505h1v7h-1zM921 499h1v7h-1zM922 494h1v6h-1zM923 488h1v7h-1zM924 481h1v8h-1zM925 475h1v7h-1zM926 469h1v7h-1zM927 462h1v8h-1zM928 455h1v8h-1zM929 448h1v8h-1zM930 441h1v8h-1zM931 434h1v8h-1zM932 427h1v8h-1zM933 420h1v8h-1zM934 412h1v9h-1zM935 405h1v8h-1zM936 397h1v9h-1zM937 390h1v8h-1zM938 382h1v9h-1zM939 374h1v9h-1zM940 366h1v9h-1zM941 359h1v8h-1zM942 351h1v9h-1zM943 343h1v9h-1zM944 335h1v9h-1zM945 327h1v9h-1zM946 319h1v9h-1zM947 311h1v9h-1zM948 303h1v9h-1zM949 295h1v9h-1zM950 287h1v9h-1zM951 280h1v8h-1zM952 272h1v9h-1zM953 264h1v9h-1zM954 257h1v8h-1zM955 249h1v9h-1zM956 242h1v8h-1zM957 235h1v8h-1zM958 227h1v9h-1zM959 220h1v8h-1zM960 214h1v7h-1zM961 210h1v5h-1z" fill="#0038d8" shape-rendering="crispEdges"/><rect x="96" y="54" width="5" height="1" fill="#000"/><rect x="96" y="95" width="5" height="1" fill="#000"/><rect x="96" y="137" width="5" height="1" fill="#000"/><rect x="96" y="178" width="5" height="1" fill="#000"/><rect x="96" y="220" width="5" height="1" fill="#000"/><rect x="96" y="261" width="5" height="1" fill="#000"/><rect x="96" y="303" width="5" height="1" fill="#000"/><rect x="96" y="344" width="5" height="1" fill="#000"/><rect x="96" y="386" width="5" height="1" fill="#000"/><rect x="96" y="427" width="5" height="1" fill="#000"/><rect x="96" y="469" width="5" height="1" fill="#000"/><rect x="96" y="510" width="5" height="1" fill="#000"/><rect x="96" y="552" width="5" height="1" fill="#000"/><rect x="96" y="593" width="5" height="1" fill="#000"/><rect x="964" y="54" width="5" height="1" fill="#000"/><rect x="964" y="93" width="5" height="1" fill="#000"/><rect x="964" y="131" width="5" height="1" fill="#000"/><rect x="964" y="170" width="5" height="1" fill="#000"/><rect x="964" y="208" width="5" height="1" fill="#000"/><rect x="964" y="247" width="5" height="1" fill="#000"/><rect x="964" y="285" width="5" height="1" fill="#000"/><rect x="964" y="324" width="5" height="1" fill="#000"/><rect x="964" y="362" width="5" height="1" fill="#000"/><rect x="964" y="401" width="5" height="1" fill="#000"/><rect x="964" y="439" width="5" height="1" fill="#000"/><rect x="964" y="478" width="5" height="1" fill="#000"/><rect x="964" y="516" width="5" height="1" fill="#000"/><rect x="964" y="555" width="5" height="1" fill="#000"/><rect x="964" y="593" width="5" height="1" fill="#000"/><rect x="103" y="596" width="1" height="5" fill="#000"/><rect x="175" y="596" width="1" height="5" fill="#000"/><rect x="246" y="596" width="1" height="5" fill="#000"/><rect x="318" y="596" width="1" height="5" fill="#000"/><rect x="389" y="596" width="1" height="5" fill="#000"/><rect x="461" y="596" width="1" height="5" fill="#000"/><rect x="532" y="596" width="1" height="5" fill="#000"/><rect x="604" y="596" width="1" height="5" fill="#000"/><rect x="675" y="596" width="1" height="5" fill="#000"/><rect x="747" y="596" width="1" height="5" fill="#000"/><rect x="818" y="596" width="1" height="5" fill="#000"/><rect x="890" y="596" width="1" height="5" fill="#000"/><rect x="961" y="596" width="1" height="5" fill="#000"/>
<g font-family="Liberation Sans, sans-serif" font-size="12" fill="#000" filter="url(#crisp)">
<text x="94" y="59" text-anchor="end">0.004</text><text x="94" y="100" text-anchor="end">0.0035</text><text x="94" y="142" text-anchor="end">0.003</text><text x="94" y="183" text-anchor="end">0.0025</text><text x="94" y="225" text-anchor="end">0.002</text><text x="94" y="266" text-anchor="end">0.0015</text><text x="94" y="308" text-anchor="end">0.001</text><text x="94" y="349" text-anchor="end">0.0005</text><text x="94" y="391" text-anchor="end">0</text><text x="94" y="432" text-anchor="end">-0.0005</text><text x="94" y="474" text-anchor="end">-0.001</text><text x="94" y="515" text-anchor="end">-0.0015</text><text x="94" y="557" text-anchor="end">-0.002</text><text x="94" y="598" text-anchor="end">-0.0025</text><text x="970.5" y="59">0.035</text><text x="970.5" y="98">0.03</text><text x="970.5" y="136">0.025</text><text x="970.5" y="175">0.02</text><text x="970.5" y="213">0.015</text><text x="970.5" y="252">0.01</text><text x="970.5" y="290">0.005</text><text x="970.5" y="329">0</text><text x="970.5" y="367">-0.005</text><text x="970.5" y="406">-0.01</text><text x="970.5" y="444">-0.015</text><text x="970.5" y="483">-0.02</text><text x="970.5" y="521">-0.025</text><text x="970.5" y="560">-0.03</text><text x="970.5" y="598">-0.035</text><text x="102.7" y="614" text-anchor="middle">0</text><text x="174.7" y="614" text-anchor="middle">0.001</text><text x="245.7" y="614" text-anchor="middle">0.002</text><text x="317.7" y="614" text-anchor="middle">0.003</text><text x="388.7" y="614" text-anchor="middle">0.004</text><text x="460.7" y="614" text-anchor="middle">0.005</text><text x="531.7" y="614" text-anchor="middle">0.006</text><text x="603.7" y="614" text-anchor="middle">0.007</text><text x="674.7" y="614" text-anchor="middle">0.008</text><text x="746.7" y="614" text-anchor="middle">0.009</text><text x="817.7" y="614" text-anchor="middle">0.01</text><text x="889.7" y="614" text-anchor="middle">0.011</text><text x="960.7" y="614" text-anchor="middle">0.012</text><text x="529.5" y="633" text-anchor="middle" letter-spacing="0.5">Time</text><text transform="translate(42.7 326) rotate(-90)" text-anchor="middle">Channel 1</text><text transform="translate(1015 323.5) rotate(90)" text-anchor="middle">Channel 2</text><text x="18.5" y="23" letter-spacing="0.5">G/P D</text><text x="70" y="21" letter-spacing="0.4">Wave</text>
</g>
</svg>
</body></html>
